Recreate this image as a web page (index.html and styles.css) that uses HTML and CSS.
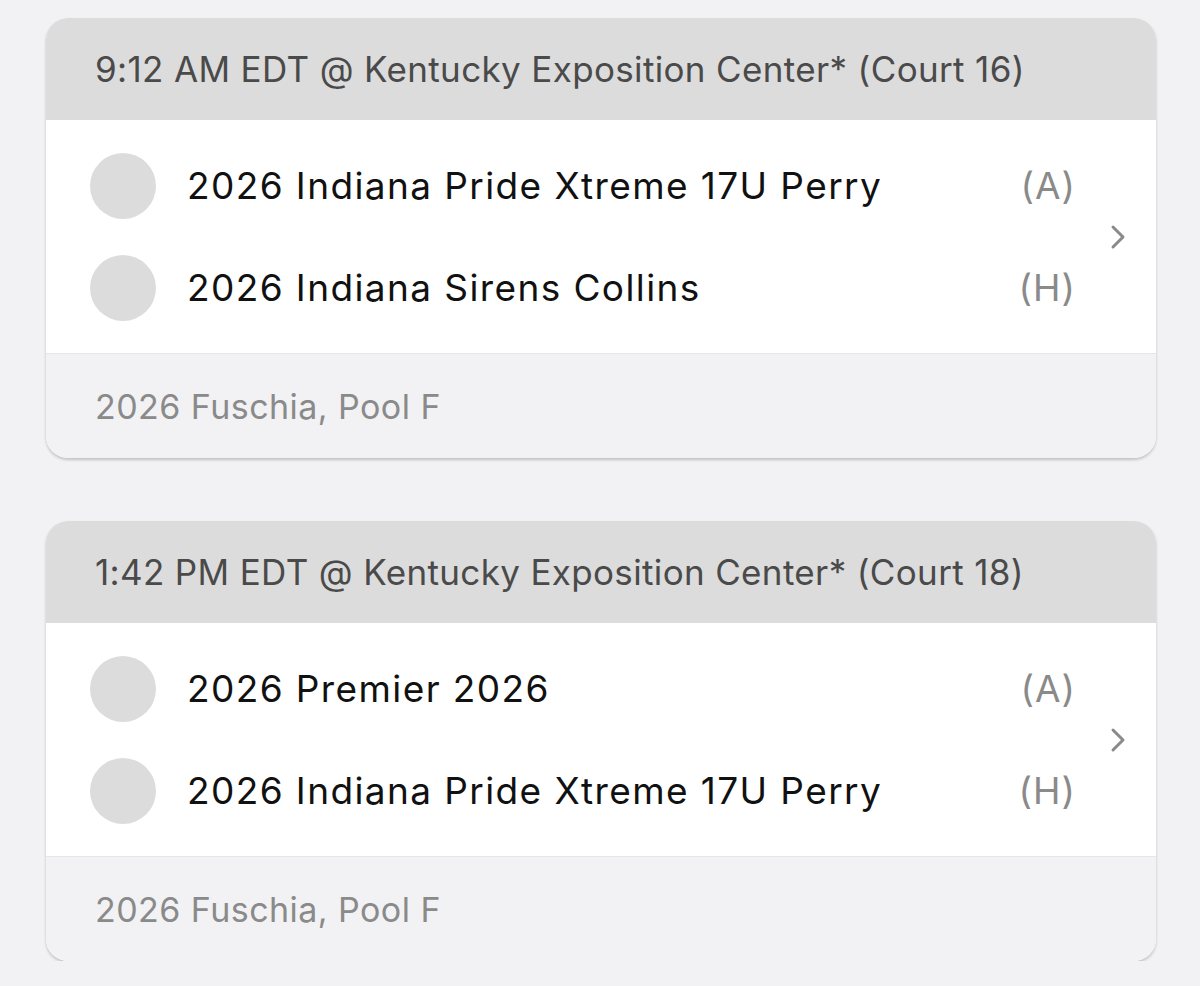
FILE: index.html
```html
<!DOCTYPE html>
<html lang="en">
<head>
    <meta charset="UTF-8">
    <meta name="viewport" content="width=device-width, initial-scale=1.0">
    <title>Schedule</title>
    <link rel="stylesheet" href="styles.css">
</head>
<body>

    <div class="match-list">
        <div class="match-card">
            <div class="match-head">9:12 AM EDT @ Kentucky Exposition Center* (Court 16)</div>
            <div class="match-body">
                <div class="teams">
                    <div class="team">
                        <span class="avatar"></span>
                        <span class="team-name">2026 Indiana Pride Xtreme 17U Perry</span>
                        <span class="side">(A)</span>
                    </div>
                    <div class="team">
                        <span class="avatar"></span>
                        <span class="team-name">2026 Indiana Sirens Collins</span>
                        <span class="side">(H)</span>
                    </div>
                </div>
                <svg class="chevron" viewBox="0 0 16 28" width="16" height="28">
                    <path d="M3 4 L13 14 L3 24" fill="none" stroke="#8a8a8a" stroke-width="3" stroke-linecap="round" stroke-linejoin="round"/>
                </svg>
            </div>
            <div class="match-foot">2026 Fuschia, Pool F</div>
        </div>

        <div class="match-card">
            <div class="match-head">1:42 PM EDT @ Kentucky Exposition Center* (Court 18)</div>
            <div class="match-body">
                <div class="teams">
                    <div class="team">
                        <span class="avatar"></span>
                        <span class="team-name">2026 Premier 2026</span>
                        <span class="side">(A)</span>
                    </div>
                    <div class="team">
                        <span class="avatar"></span>
                        <span class="team-name">2026 Indiana Pride Xtreme 17U Perry</span>
                        <span class="side">(H)</span>
                    </div>
                </div>
                <svg class="chevron" viewBox="0 0 16 28" width="16" height="28">
                    <path d="M3 4 L13 14 L3 24" fill="none" stroke="#8a8a8a" stroke-width="3" stroke-linecap="round" stroke-linejoin="round"/>
                </svg>
            </div>
            <div class="match-foot">2026 Fuschia, Pool F</div>
        </div>
    </div>

</body>
</html>
```

FILE: styles.css
```css
body {
    margin: 0;
    padding: 0;
    background-color: #f2f2f4;
    font-family: Inter, 'Noto Sans', sans-serif;
}

.match-list {
    display: flex;
    flex-direction: column;
    gap: 63px;
    padding: 18px 44px 0 46px;
}

.match-card {
    border-radius: 22px;
    overflow: hidden;
    background-color: #fff;
    box-shadow: 0 2px 3px rgba(0, 0, 0, 0.2);
}

.match-head {
    height: 102px;
    display: flex;
    align-items: center;
    padding-left: 49px;
    background-color: #dcdcdc;
    color: #4a4a4a;
    font-size: 35px;
    letter-spacing: 0.35px;
}

.match-body {
    display: flex;
    align-items: center;
    height: 234px;
    border-bottom: 1px solid #e6e6e8;
    box-sizing: border-box;
}

.teams {
    flex: 1;
    display: flex;
    flex-direction: column;
    gap: 36px;
    padding-left: 44px;
}

.team {
    display: flex;
    align-items: center;
    height: 66px;
}

.avatar {
    width: 66px;
    height: 66px;
    border-radius: 50%;
    background-color: #dcdcdc;
    flex-shrink: 0;
}

.team-name {
    flex: 1;
    margin-left: 31px;
    color: #111;
    font-size: 37px;
    letter-spacing: 1.4px;
}

.side {
    color: #8a8a8a;
    font-size: 37px;
    letter-spacing: 1px;
}

.chevron {
    margin: 0 30px 0 34px;
}

.match-foot {
    height: 104px;
    display: flex;
    align-items: center;
    padding-left: 49px;
    background-color: #f2f2f4;
    color: #8a8a8a;
    font-size: 34px;
    letter-spacing: 0.45px;
}
```
